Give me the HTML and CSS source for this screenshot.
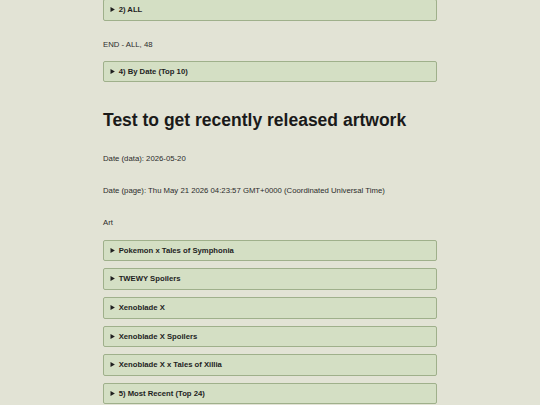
FILE: index.html
```html
<!DOCTYPE html>
<html lang="en">
<head>
<meta charset="utf-8">
<title>Artwork</title>
<link rel="stylesheet" href="styles.css">
</head>
<body>
<main class="page">
  <details class="box first"><summary>2) ALL</summary></details>
  <p class="text end">END - ALL, 48</p>
  <details class="box"><summary>4) By Date (Top 10)</summary></details>
  <h1 class="title">Test to get recently released artwork</h1>
  <p class="text">Date (data): 2026-05-20</p>
  <p class="text">Date (page): Thu May 21 2026 04:23:57 GMT+0000 (Coordinated Universal Time)</p>
  <p class="text art">Art</p>
  <details class="box"><summary>Pokemon x Tales of Symphonia</summary></details>
  <details class="box"><summary>TWEWY Spoilers</summary></details>
  <details class="box"><summary>Xenoblade X</summary></details>
  <details class="box"><summary>Xenoblade X Spoilers</summary></details>
  <details class="box"><summary>Xenoblade X x Tales of Xillia</summary></details>
  <details class="box"><summary>5) Most Recent (Top 24)</summary></details>
</main>
</body>
</html>
```
FILE: styles.css
```css
html, body {
  margin: 0;
  padding: 0;
  background: #e2e3d5;
}
body {
  font-family: "Liberation Sans", Arial, sans-serif;
  color: #222;
}
.page {
  width: 334px;
  margin: 0 auto;
  padding-top: 0;
}
.box {
  background: #d4dfc4;
  border: 1px solid #9fb08b;
  border-radius: 2px;
  padding: 0 6.5px;
  margin: 0 0 7px 0;
}
.box summary {
  font-size: 7.7px;
  font-weight: bold;
  line-height: 19.6px;
  color: #1e1e1e;
  cursor: pointer;
}
.first {
  margin-top: -0.6px;
}
.text {
  font-size: 7.75px;
  line-height: 10px;
  margin: 22px 0 0 0;
  color: #2c2c2c;
}
.end {
  margin-top: 18.6px;
  margin-bottom: 11.2px;
}
.art {
  margin-bottom: 11.7px;
}
.title {
  font-size: 17.5px;
  line-height: 22px;
  font-weight: bold;
  margin: 26.6px 0 23.1px 0;
  color: #1a1a1a;
}
.title + .text {
  margin-top: 0;
}
```
